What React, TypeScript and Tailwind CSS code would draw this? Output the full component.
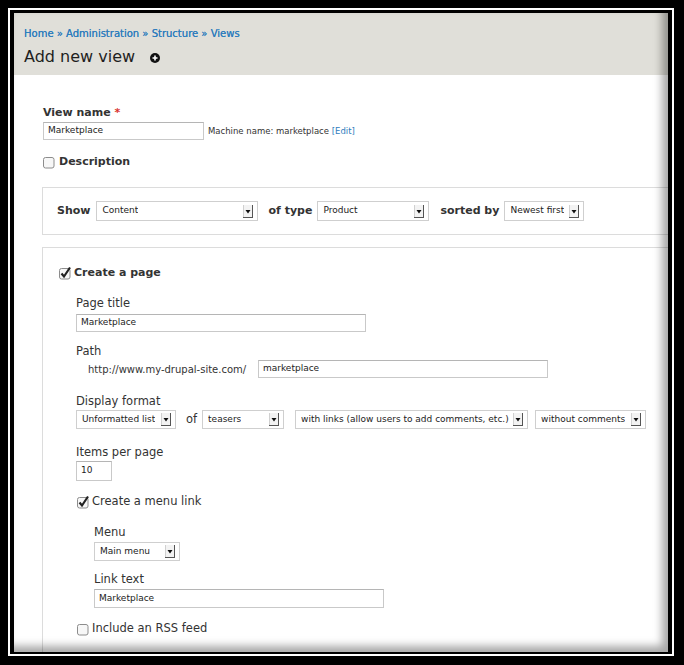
import React from "react";

function Arrow() {
  return (
    <svg width="10" height="13" viewBox="0 0 10 13" className="shrink-0">
      <rect x="0" y="0" width="10" height="13" fill="#f3f3f3" />
      <line x1="0.5" y1="0" x2="0.5" y2="13" stroke="#d0d0d0" />
      <line x1="9.5" y1="0" x2="9.5" y2="13" stroke="#555" />
      <line x1="0" y1="12.5" x2="10" y2="12.5" stroke="#555" />
      <polygon points="2.5,5 7.5,5 5,8.5" fill="#111" />
    </svg>
  );
}

function Select({ value, w, h = 19 }: { value: string; w: number; h?: number }) {
  return (
    <div
      className="flex shrink-0 items-center justify-between border border-[#cfcfcf] bg-white pl-[5px] pr-[4px] text-[9px] font-normal text-[#222]"
      style={{ width: w, height: h }}
    >
      <span className="truncate">{value}</span>
      <Arrow />
    </div>
  );
}

function Input({ value, w, h = 18 }: { value: string; w: number; h?: number }) {
  return (
    <div
      className="flex shrink-0 items-center border border-[#c9c9c9] border-t-[#b5b5b5] bg-white pl-[4px] text-[9px] font-normal text-[#222]"
      style={{ width: w, height: h }}
    >
      {value}
    </div>
  );
}

function Check({ checked }: { checked?: boolean }) {
  return (
    <svg width="13" height="13" viewBox="0 0 13 13" className="shrink-0 overflow-visible">
      <rect x="0.5" y="1.5" width="10.5" height="10.5" rx="2" fill="#f7f7f7" stroke="#8c8c8c" />
      {checked && <path d="M2.5 6.5 L5 9.5 L11 0.5" fill="none" stroke="#222" strokeWidth="2.2" />}
    </svg>
  );
}

export default function App() {
  return (
    <div className="flex h-[665px] w-[684px] flex-col overflow-hidden bg-black pb-[9px] pl-[8px] pr-[10px] pt-[8px] font-['DejaVu_Sans',sans-serif] text-[#333]">
      <div className="flex min-h-0 flex-1 flex-col border-2 border-white">
        <div className="flex min-h-0 flex-1 flex-col bg-black pb-[2px] pl-[4px] pr-[4px] pt-[3px]">
          <div className="relative min-h-0 flex-1 overflow-hidden bg-white">
            {/* header */}
            <div className="h-[62px] bg-[#e0dfd9] pl-[10px] pt-[14px]">
              <div className="text-[10px] leading-[13px] text-[#2f7dbd] [text-shadow:0_0_0.4px_#2f7dbd]">
                Home » Administration » Structure » Views
              </div>
              <div className="mt-[6px] flex items-center text-[16px] leading-[22px] text-[#1e1e1e]">
                Add new view
                <svg width="10" height="10" viewBox="0 0 10 10" className="ml-[15px] mt-[2px]">
                  <circle cx="5" cy="5" r="5" fill="#111" />
                  <path d="M5 2.5v5M2.5 5h5" stroke="#fff" strokeWidth="1.6" />
                </svg>
              </div>
            </div>

            {/* form */}
            <div className="pl-[28px] pt-[30px]">
              <div className="pl-[1px] text-[11px] font-bold leading-[15px]">
                View name <span className="text-[#d9342b]">*</span>
              </div>
              <div className="mt-[2px] flex items-center pl-[1px]">
                <Input value="Marketplace" w={161} />
                <span className="ml-[4px] text-[8.5px] text-[#333]">
                  Machine name: marketplace <span className="text-[#2f7dbd]">[Edit]</span>
                </span>
              </div>
              <div className="mt-[14px] flex h-[16px] items-center gap-[3px] pl-[1px] text-[11px] font-bold">
                <Check />
                Description
              </div>

              <div className="mt-[17px] flex h-[48px] w-[700px] items-center border border-[#dcdcdc] pl-[14px] text-[11px] font-bold">
                <span>Show</span>
                <div className="ml-[6px]">
                  <Select value="Content" w={162} h={20} />
                </div>
                <span className="ml-[10px]">of type</span>
                <div className="ml-[5px]">
                  <Select value="Product" w={112} h={20} />
                </div>
                <span className="ml-[11px]">sorted by</span>
                <div className="ml-[5px]">
                  <Select value="Newest first" w={80} h={20} />
                </div>
              </div>

              <div className="mt-[12px] h-[500px] w-[700px] border border-[#dcdcdc] pl-[16px] pt-[17px]">
                <div className="flex h-[16px] items-center gap-[2px] text-[11px] font-bold">
                  <Check checked />
                  Create a page
                </div>
                <div className="pl-[17px] text-[11.5px]">
                  <div className="mt-[14px] leading-[16px]">Page title</div>
                  <div className="mt-[3px]">
                    <Input value="Marketplace" w={290} />
                  </div>

                  <div className="mt-[11px] leading-[16px]">Path</div>
                  <div className="mt-[1px] flex items-center pl-[12px]">
                    <span className="w-[170px] text-[10px]">http://www.my-drupal-site.com/</span>
                    <Input value="marketplace" w={290} />
                  </div>

                  <div className="mt-[15px] leading-[16px]">Display format</div>
                  <div className="mt-[1px] flex items-center">
                    <Select value="Unformatted list" w={100} />
                    <span className="ml-[10px] text-[11.5px]">of</span>
                    <div className="ml-[5px]">
                      <Select value="teasers" w={82} />
                    </div>
                    <div className="ml-[11px]">
                      <Select value="with links (allow users to add comments, etc.)" w={233} />
                    </div>
                    <div className="ml-[7px]">
                      <Select value="without comments" w={111} />
                    </div>
                  </div>

                  <div className="mt-[15px] leading-[16px]">Items per page</div>
                  <div className="mt-[1px]">
                    <Input value="10" w={36} h={20} />
                  </div>

                  <div className="mt-[13px] flex h-[16px] items-center gap-[2px] pl-[1px]">
                    <Check checked />
                    Create a menu link
                  </div>
                  <div className="pl-[18px]">
                    <div className="mt-[14px] leading-[16px]">Menu</div>
                    <div className="mt-[2px]">
                      <Select value="Main menu" w={86} />
                    </div>
                    <div className="mt-[10px] leading-[16px]">Link text</div>
                    <div className="mt-[2px]">
                      <Input value="Marketplace" w={290} h={19} />
                    </div>
                  </div>
                  <div className="mt-[13px] flex h-[16px] items-center gap-[2px] pl-[1px]">
                    <Check />
                    Include an RSS feed
                  </div>
                </div>
              </div>
            </div>

            {/* edge shading */}
            <div className="pointer-events-none absolute inset-0 shadow-[inset_-6px_-6px_8px_rgba(0,0,0,0.35)]" />
          </div>
        </div>
      </div>
    </div>
  );
}
